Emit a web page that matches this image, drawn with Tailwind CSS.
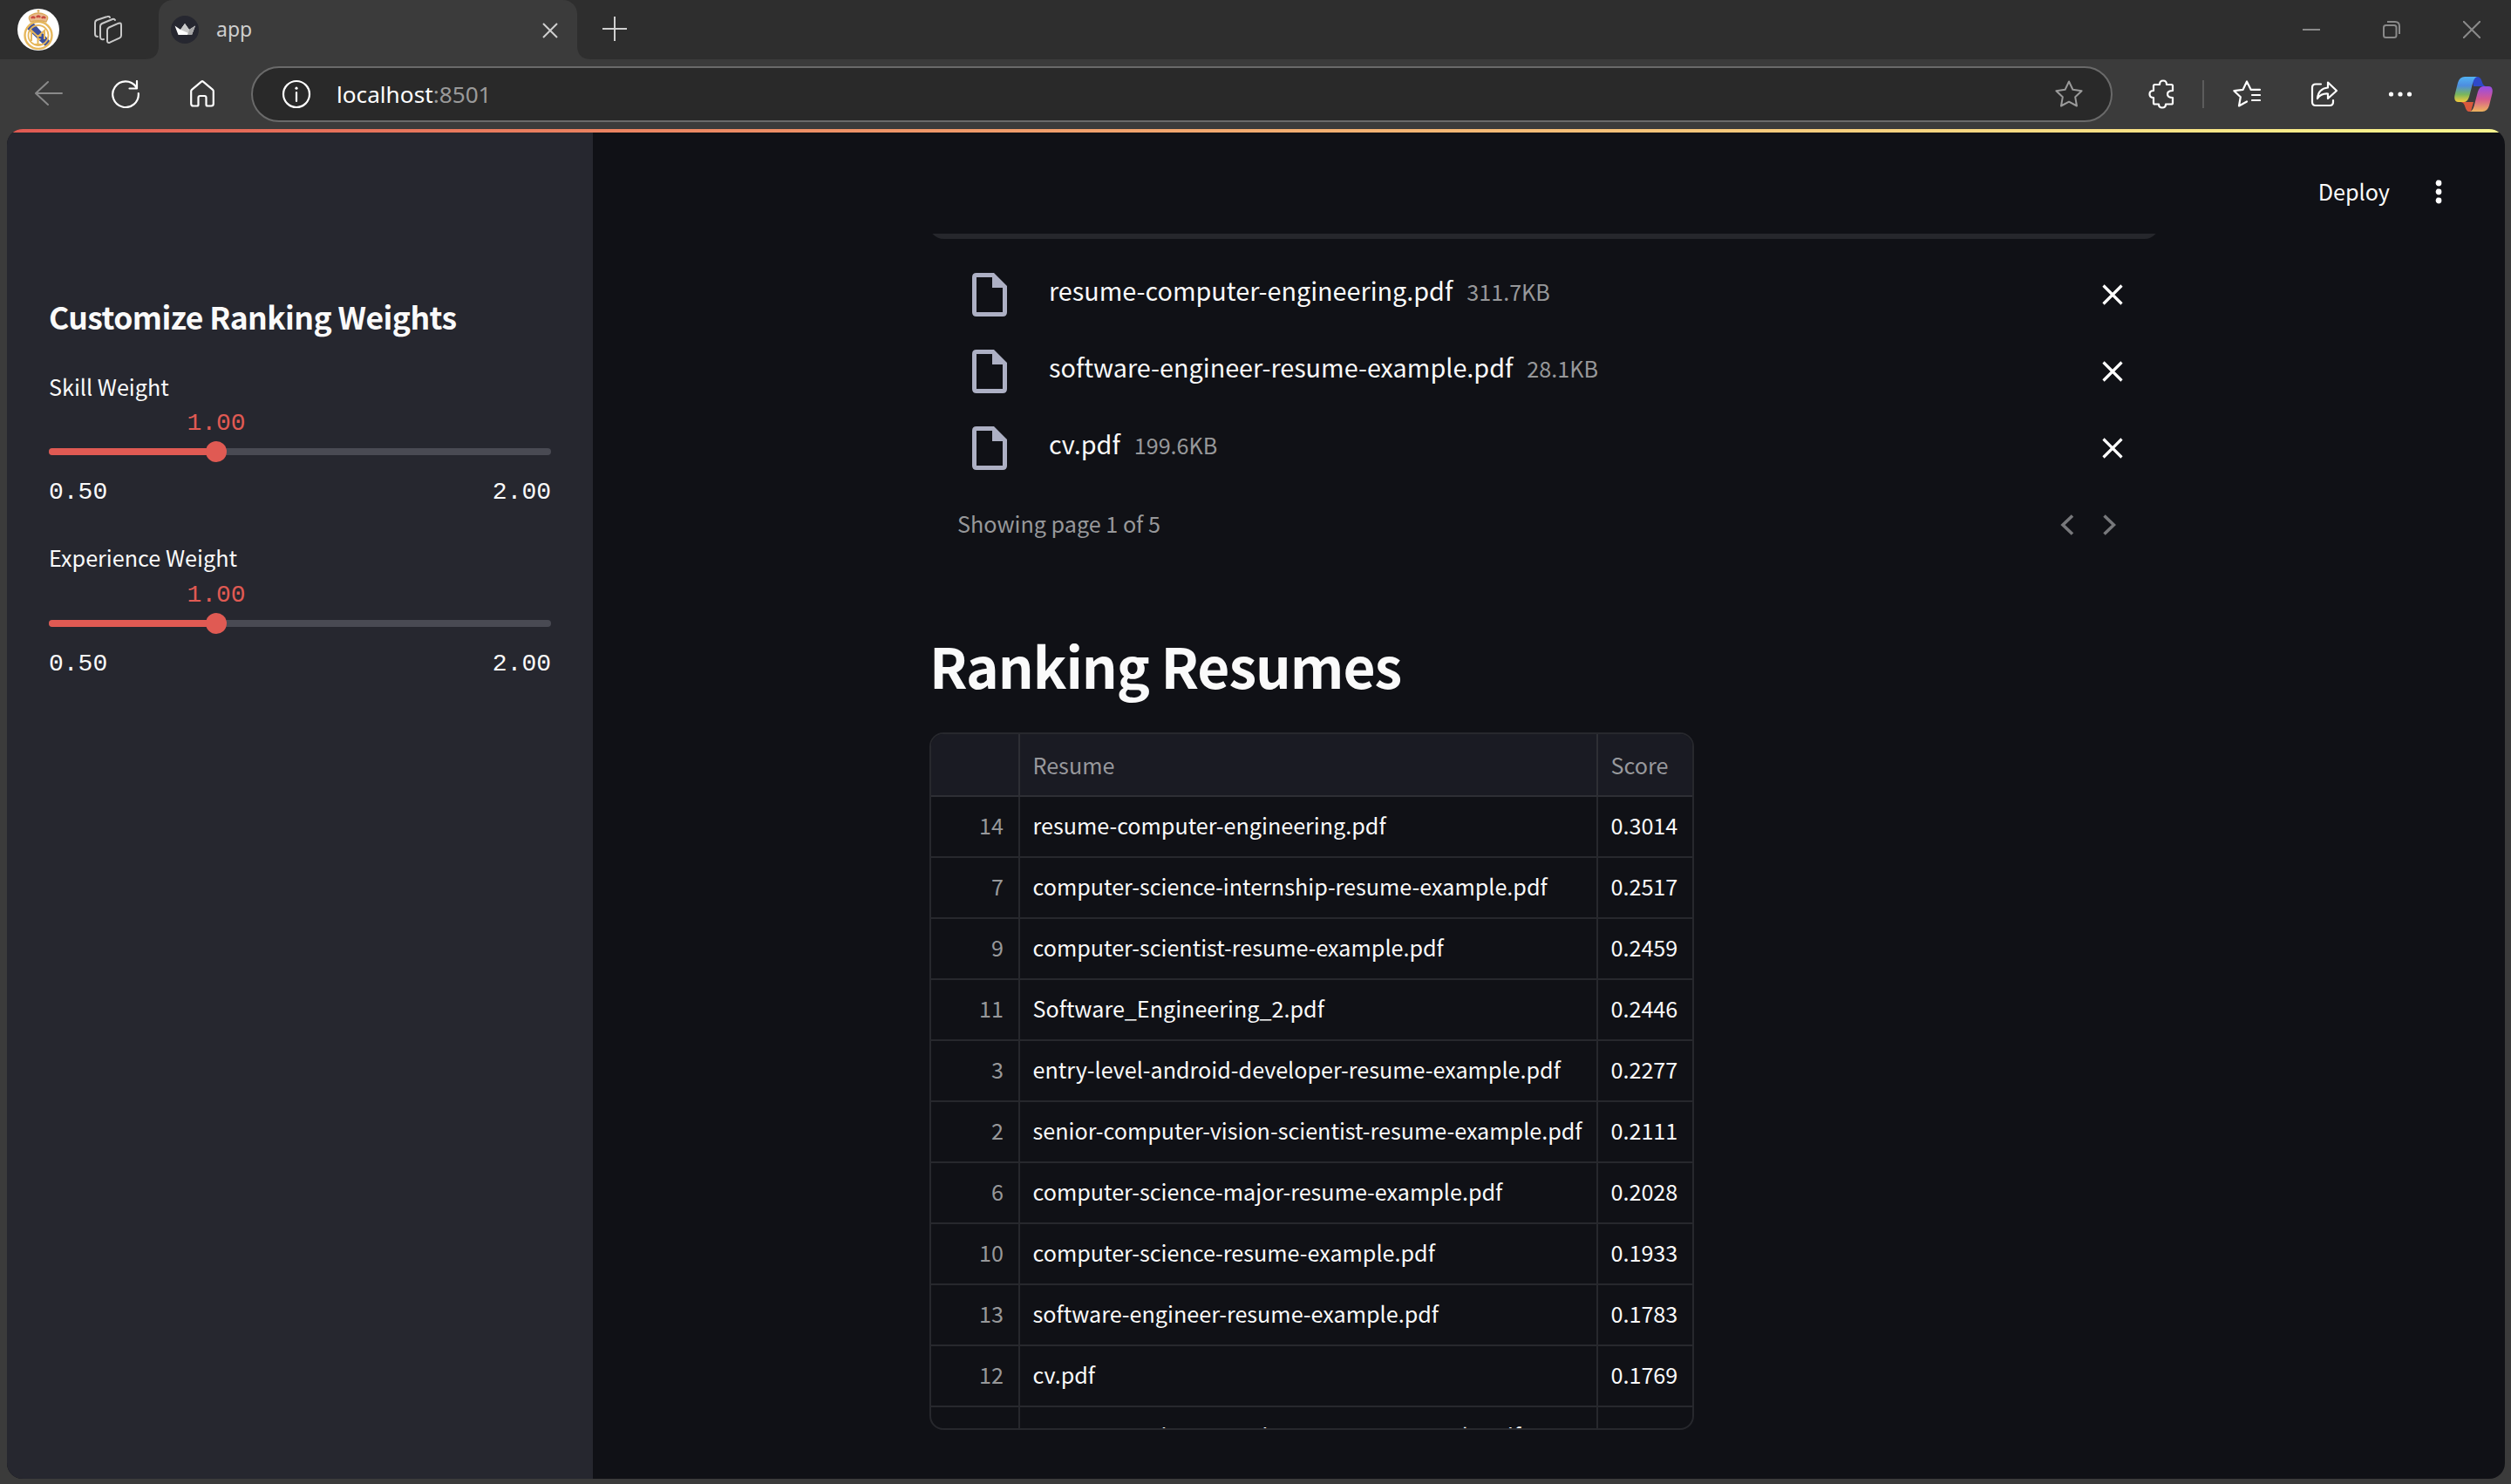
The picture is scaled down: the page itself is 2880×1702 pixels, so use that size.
<!DOCTYPE html>
<html lang="en"><head><meta charset="utf-8"><title>app</title>
<script src="https://cdn.jsdelivr.net/npm/@tailwindcss/browser@4"></script></head>
<body class="bg-[#3b3b3b] w-[2880px] h-[1702px] overflow-hidden font-['Noto_Sans_CJK_JP',sans-serif] text-[#fafafa]">
<div class="flex flex-col h-full">
  <!-- tab strip -->
  <header class="flex h-[68px] bg-[#2e2e2e] font-['Noto_Sans','Open_Sans',sans-serif]">
    <div class="w-[182px] flex items-center pl-5">
      <svg class="w-12 h-12" viewBox="0 0 48 48"><circle cx="24" cy="24" r="24" fill="#fff"/><path d="M10 22l8-6 20 22-6 5z" fill="#3c4f9c"/><circle cx="24" cy="30.500000" r="15.500000" fill="none" stroke="#e6b75c" stroke-width="2.400000"/><circle cx="24" cy="30.500000" r="11.500000" fill="none" stroke="#e6b75c" stroke-width="1.800000"/><path d="M16 37V25l7.500000 7 7.500000-7v10M23.500000 41V30M23.500000 31h4M23.500000 35h3M20 41h7" fill="none" stroke="#e6b75c" stroke-width="2"/><path d="M15 15q-4-6 1-8 4-2 8-2t8 2q5 2 1 8-9-2.500000-18 0z" fill="#e9b98f" stroke="#dba95a" stroke-width="1.300000"/><path d="M16 11q2-3 4 0M22 10q2-3 4 0M28 11q2-3 4 0" fill="none" stroke="#c9493f" stroke-width="2.400000"/><path d="M24 5V1M22.500000 2.500000h3" stroke="#dba95a" stroke-width="1.300000"/></svg>
      <svg class="w-8 h-8 ml-10" viewBox="0 0 32 32" fill="none" stroke="#c8c8c8" stroke-width="2" stroke-linejoin="round" stroke-linecap="round"><path d="M17 13.500000l11-4.800000q3-1 3 2v12q0 2-2 3l-11 5q-3 1-3-2v-12q0-2.200000 2-3.200000z"/><path d="M11 27q-4 1-4-3V12q0-2 2-3l12-5q2-.8 3 1"/><path d="M4 24q-3 0-3-3V8q0-2 2-3L15 1q2-.8 3 1"/></svg>
    </div>
    <div class="relative w-[480px] h-full rounded-t-[16px] bg-[#3b3b3b] flex items-center pl-[14px] pr-[22px]">
      <svg class="absolute -left-4 bottom-0 w-4 h-4" viewBox="0 0 16 16"><path d="M16 0v16H0Q16 16 16 0z" fill="#3b3b3b"/></svg>
      <svg class="absolute -right-4 bottom-0 w-4 h-4" viewBox="0 0 16 16"><path d="M0 0v16h16Q0 16 0 0z" fill="#3b3b3b"/></svg>
      <svg class="w-8 h-8" viewBox="0 0 32 32"><circle cx="16" cy="16" r="16" fill="#262730"/><path d="M4.500000 11.500000l6.500000 4.500000 5-7 5 7 7-4.500000-4 10.500000H8.500000z" fill="#fff"/><path d="M16 9l5 7-1 4-9-4z" fill="#c8c8c8"/><path d="M28 11.500000l-4 10.500000h-5l2-6z" fill="#a8a8a8"/></svg>
      <span class="ml-5 -mt-0.5 text-[23px] leading-none text-[#cfcfcf]">app</span>
      <svg class="ml-auto mt-0.5 w-[18px] h-[18px]" viewBox="0 0 18 18" stroke="#d0d0d0" stroke-width="2"><path d="M1 1l16 16M17 1L1 17"/></svg>
    </div>
    <svg class="ml-[29px] mt-[19px] w-7 h-7" viewBox="0 0 28 28" stroke="#d0d0d0" stroke-width="2"><path d="M14 0v28M0 14h28"/></svg>
    <div class="ml-auto mr-[35px] flex items-center gap-[72px]">
      <svg class="w-5 h-5" viewBox="0 0 20 20" stroke="#8a8a8a" stroke-width="2"><path d="M0 10h20"/></svg>
      <svg class="w-5 h-5" viewBox="0 0 20 20" stroke="#8a8a8a" stroke-width="2" fill="none"><rect x="1" y="5" width="14.500000" height="14" rx="2.500000"/><path d="M5 1h9q5 0 5 5v9"/></svg>
      <svg class="w-5 h-5" viewBox="0 0 20 20" stroke="#8a8a8a" stroke-width="2"><path d="M0 0l20 20M20 0L0 20"/></svg>
    </div>
  </header>
  <!-- toolbar -->
  <nav class="flex items-center h-20 pl-10 pr-[21px] font-['Noto_Sans','Open_Sans',sans-serif]">
    <svg class="w-8 h-8" viewBox="0 0 32 32" fill="none" stroke="#8a8a8a" stroke-width="2" stroke-linecap="round" stroke-linejoin="round"><path d="M31 15H1M15 2L1 15l14 13"/></svg>
    <svg class="w-8 h-8 ml-14" viewBox="0 0 32 32" fill="none" stroke="#fff" stroke-width="2.200000" stroke-linecap="round" stroke-linejoin="round"><path d="M30.800000 15A14.800000 14.800000 0 1 1 28 7.500000M29 1v8.500000h-8.500000"/></svg>
    <svg class="w-7 h-8 ml-[58px]" viewBox="0 0 28 32" fill="none" stroke="#fff" stroke-width="2.200000" stroke-linejoin="round"><path d="M1.200000 12.500000Q1.200000 11.500000 2 10.800000L13 1.600000q1-.8 2 0l11 9.200000q.8.7.8 1.700000V27q0 2.500000-2.500000 2.500000H20q-1.500000 0-1.500000-1.500000v-8q0-2-2-2h-5q-2 0-2 2v8q0 1.500000-1.500000 1.500000H3.700000Q1.200000 29.500000 1.200000 27z"/></svg>
    <div class="ml-[42px] w-[2135px] h-16 rounded-full border-2 border-[#6a6a6a] bg-[#292929] flex items-center pl-[33px] pr-8">
      <svg class="w-[34px] h-[34px]" viewBox="0 0 34 34" fill="none" stroke="#fff" stroke-width="2.200000"><circle cx="17" cy="17" r="15"/><path d="M17 15v10" stroke-linecap="round"/><circle cx="17" cy="10.200000" r="1.600000" fill="#fff" stroke="none"/></svg>
      <span class="ml-[29px] text-[26.200000px] leading-none text-white">localhost<span class="text-[#9a9a9a]">:8501</span></span>
      <svg class="ml-auto w-8 h-8" viewBox="0 0 32 32" fill="none" stroke="#9a9a9a" stroke-width="2" stroke-linejoin="round"><path d="M16 1.500000l4.400000 9.300000 10.200000 1.400000-7.400000 7.100000 1.800000 10.200000L16 24.700000l-9 4.800000 1.800000-10.200000L1.400000 12.200000l10.200000-1.400000z"/></svg>
    </div>
    <svg class="ml-[41px] w-[30px] h-9" viewBox="0 0 30 36" fill="none" stroke="#fff" stroke-width="2.200000" stroke-linejoin="round"><path d="M28 14V8.500000Q28 7 26.500000 7H21q0-4.500000-4-4.500000T13 7H7.500000Q6 7 6 8.500000V14q-4.500000 0-4.500000 4T6 22v6q0 1.500000 1.500000 1.500000H12q0 4 4 4t4-4h6.500000Q28 29.500000 28 28v-6q-6 0-6-4t6-4z"/></svg>
    <div class="ml-8 w-0.5 h-8 bg-[#5c5c5c]"></div>
    <svg class="ml-[33px] w-8 h-8" viewBox="0 0 32 32" fill="none" stroke="#fff" stroke-width="2.200000" stroke-linejoin="round" stroke-linecap="round"><path d="M20.500000 10.500000L16 1.500000l-4.400000 9.300000-10.200000 1.400000 7.400000 7.100000L7 29.500000l9-5M20.500000 10.800000H31M22 17h9M22 23h9"/></svg>
    <svg class="ml-[57px] w-8 h-8" viewBox="0 0 32 32" fill="none" stroke="#fff" stroke-width="2.200000" stroke-linejoin="round" stroke-linecap="round"><path d="M12 4.500000H6q-4 0-4 4V25q0 4 4 4h16q4 0 4-4v-2M20 2.500000L30 12 20 21v-5.500000Q12 15 8 21 9 9.500000 20 8.500000z"/></svg>
    <svg class="ml-[57px] w-7 h-8" viewBox="0 0 28 32" fill="#fff"><circle cx="3.500000" cy="16" r="2.600000"/><circle cx="14" cy="16" r="2.600000"/><circle cx="24.500000" cy="16" r="2.600000"/></svg>
    <svg class="ml-auto w-11 h-10" viewBox="0 0 44 40"><defs><linearGradient id="a" x2="0" y2="1"><stop stop-color="#52b3f3"/><stop offset=".35" stop-color="#4d8de0"/><stop offset=".7" stop-color="#79b65c"/><stop offset="1" stop-color="#f5cb3c"/></linearGradient><linearGradient id="b" x2="0" y2="1"><stop stop-color="#954de8"/><stop offset=".5" stop-color="#d5588f"/><stop offset="1" stop-color="#eeb45c"/></linearGradient></defs><path d="M20 0h6q4 0 5.500000 5 1.500000 6 5.500000 6H22z" fill="#2f49c8"/><path d="M7 29h15l-3 11h-2q-3 0-4.500000-5Q11 29 7 29z" fill="#d9583c"/><path d="M12 0h14q-3 1-4.500000 6L17 23q-2 6-6 6H5q-6 0-4.500000-8L4 7Q6 0 12 0z" fill="url(#a)"/><path d="M32 40H18q3-1 4.500000-6L27 17q2-6 6-6h6q6 0 4.500000 8L40 33q-2 7-8 7z" fill="url(#b)"/></svg>
  </nav>
  <!-- page -->
  <div class="ml-2 w-[2865px] h-[1548px] rounded-[18px] overflow-hidden bg-[#101116] flex flex-col">
    <div class="h-1 shrink-0 bg-gradient-to-r from-[#e05a53] to-[#f9f78f]"></div>
    <div class="flex flex-1 min-h-0">
      <aside class="w-[672px] bg-[#26272f] px-12 pt-[183px]">
        <h2 class="text-[35.500000px] tracking-[-0.58px] font-bold leading-[56px] whitespace-nowrap">Customize Ranking Weights</h2>
        <div class="mt-[32px] h-[197px]">
          <div class="text-[25.200000px] leading-[40px]">Skill Weight</div>
          <div class="mt-[3px] w-[384px] text-center font-['Liberation_Mono',monospace] text-[28px] leading-[40px] text-[#e05a53]">1.00</div>
          <div class="mt-2 h-2 rounded-full bg-[#494a53] flex items-center"><div class="h-2 w-1/3 rounded-l-full bg-[#e05a53]"></div><div class="-ml-3 size-6 rounded-full bg-[#e05a53] shrink-0"></div></div>
          <div class="mt-[23px] flex justify-between font-['Liberation_Mono',monospace] text-[28px] leading-[40px]"><span>0.50</span><span>2.00</span></div>
        </div>
        <div>
          <div class="text-[25.200000px] leading-[38px]">Experience Weight</div>
          <div class="mt-[5px] w-[384px] text-center font-['Liberation_Mono',monospace] text-[28px] leading-[40px] text-[#e05a53]">1.00</div>
          <div class="mt-2 h-2 rounded-full bg-[#494a53] flex items-center"><div class="h-2 w-1/3 rounded-l-full bg-[#e05a53]"></div><div class="-ml-3 size-6 rounded-full bg-[#e05a53] shrink-0"></div></div>
          <div class="mt-[23px] flex justify-between font-['Liberation_Mono',monospace] text-[28px] leading-[40px]"><span>0.50</span><span>2.00</span></div>
        </div>
      </aside>
      <main class="flex-1 flex flex-col">
        <div class="h-[116px] shrink-0 flex items-center justify-end gap-[52px] pr-[72px]">
          <span class="text-[25.200000px] leading-[40px] mt-[18px]">Deploy</span>
          <svg class="w-2 h-8 mt-5" viewBox="0 0 8 32" fill="#fff"><circle cx="4" cy="6" r="3.400000"/><circle cx="4" cy="16" r="3.400000"/><circle cx="4" cy="26" r="3.400000"/></svg>
        </div>
        <div class="ml-[386px] w-[1410px]">
          <div class="h-1.5 overflow-hidden flex items-end"><div class="w-full h-10 shrink-0 rounded-b-[16px] bg-[#26272c]"></div></div>
          <div id="files" class="pt-5 pl-8 pr-[41px]"></div>
          <div class="flex items-center justify-between pl-8 pr-[49px] h-[88px]">
            <span class="-mt-1 text-[25.150000px] leading-[40px] text-[#97989a]">Showing page 1 of 5</span>
            <svg class="w-16 h-6" viewBox="0 0 64 24" fill="none" stroke="#77787b" stroke-width="3.600000"><path d="M14 1.500000L3 12l11 10.500000M50.500000 1.500000L61.500000 12l-11 10.500000"/></svg>
          </div>
          <h1 class="mt-[71px] text-[64px] tracking-[-1.05px] font-bold leading-[90px] whitespace-nowrap">Ranking Resumes</h1>
          <div class="mt-[33px] w-[877px] h-[800px] rounded-[16px] overflow-hidden border-2 border-[#27282d] text-[25.150000px]">
            <div class="grid grid-cols-[102px_663px_108px] h-[72px] bg-[#1a1b23] text-[#97989c] border-b-2 border-[#2e2f35] leading-[70px]">
              <div class="border-r-2 border-[#2e2f35]"></div><div class="border-r-2 border-[#2e2f35] pl-[14.500000px]">Resume</div><div class="pl-[14.500000px]">Score</div>
            </div>
            <div id="rows"></div>
          </div>
        </div>
      </main>
    </div>
  </div>
</div>
<script>
document.getElementById('files').innerHTML=[['resume-computer-engineering.pdf','311.7KB'],['software-engineer-resume-example.pdf','28.1KB'],['cv.pdf','199.6KB']].map(([n,s])=>`<div class="flex items-center h-[88px]"><svg class="ml-[17px] w-10 h-[50px]" viewBox="0 0 40 50" fill="#adb0c4"><path fill-rule="evenodd" d="M5 0h20l15 15v30q0 5-5 5H5q-5 0-5-5V5Q0 0 5 0zM5 5v40h30V17H23V5z"/></svg><div class="ml-12 -mt-[9px] flex items-baseline gap-4 leading-[40px]"><span class="text-[28.750000px]">${n}</span><span class="text-[25.150000px] text-[#97989a]">${s}</span></div><svg class="ml-auto w-6 h-6" viewBox="0 0 24 24" stroke="#fff" stroke-width="3.200000"><path d="M1.500000 1.500000l21 21M22.500000 1.500000l-21 21"/></svg></div>`).join('');
document.getElementById('rows').innerHTML=[[14,'resume-computer-engineering.pdf','0.3014'],[7,'computer-science-internship-resume-example.pdf','0.2517'],[9,'computer-scientist-resume-example.pdf','0.2459'],[11,'Software_Engineering_2.pdf','0.2446'],[3,'entry-level-android-developer-resume-example.pdf','0.2277'],[2,'senior-computer-vision-scientist-resume-example.pdf','0.2111'],[6,'computer-science-major-resume-example.pdf','0.2028'],[10,'computer-science-resume-example.pdf','0.1933'],[13,'software-engineer-resume-example.pdf','0.1783'],[12,'cv.pdf','0.1769'],['','computer-science-student-resume-example.pdf','']].map(([i,n,s])=>`<div class="grid grid-cols-[102px_663px_108px] h-[70px] border-b-2 border-[#27282d] leading-[65px]"><div class="border-r-2 border-[#27282d] text-right pr-[17px] text-[#97989a]">${i}</div><div class="border-r-2 border-[#27282d] pl-[14.500000px] whitespace-nowrap">${n}</div><div class="pl-[14.500000px]">${s}</div></div>`).join('');
</script>
</body></html>
